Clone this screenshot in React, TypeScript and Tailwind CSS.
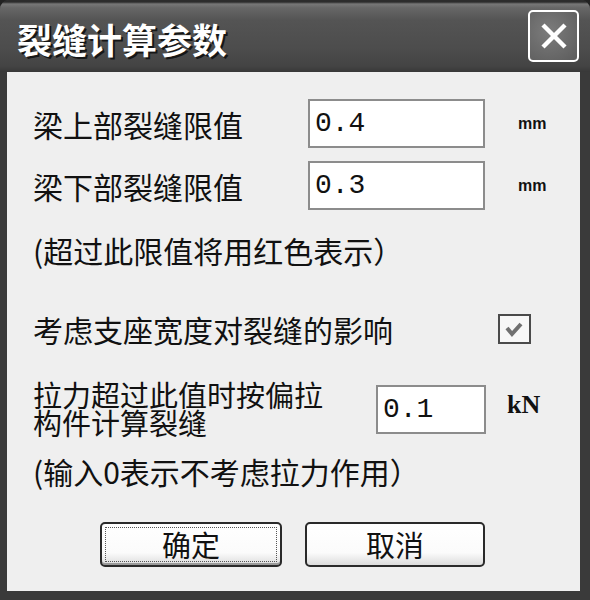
function TitleBar() {
  return (
    <div className="flex h-[72px] items-center justify-between bg-[linear-gradient(to_bottom,#2c2c2c_0px,#2c2c2c_2px,#777_4px,#666_8px,#545454_20px,#4c4c4c_50px,#444_66px,#383838_72px)] pl-[17px] pr-[11px]">
      <span className="pt-[4px] text-[35px] font-bold leading-none text-white [text-shadow:2px_2px_0_#161616]">
        裂缝计算参数
      </span>
      <div className="flex h-[52px] w-[51px] items-center justify-center rounded-[5px] border-2 border-white bg-[radial-gradient(circle_at_40%_40%,#7c7c7c,#5c5c5c)]">
        <svg width="28" height="28" viewBox="0 0 28 28">
          <line x1="3" y1="3" x2="25" y2="25" stroke="white" strokeWidth="4.5" />
          <line x1="25" y1="3" x2="3" y2="25" stroke="white" strokeWidth="4.5" />
        </svg>
      </div>
    </div>
  );
}

function Field({ value, width }: { value: string; width: string }) {
  return (
    <div
      className={`flex h-[49px] items-center border-2 border-[#8c8c8c] bg-white pl-[5px] font-['Liberation_Mono',monospace] text-[28px] leading-none text-[#111] ${width}`}
    >
      {value}
    </div>
  );
}

export default function App() {
  return (
    <div className="h-[600px] w-[590px] bg-[#222] font-['Noto_Sans_CJK_SC',sans-serif]">
      <div className="flex h-full flex-col overflow-hidden rounded-t-[9px] bg-[#3a3a3a]">
        <TitleBar />
        <div className="mb-[9px] ml-[7px] mr-[10px] flex flex-1 flex-col bg-[#efefef] pl-[26px] text-[30px] leading-none text-[#111]">
          {/* 裂缝限值 */}
          <div className="mt-[27px] flex items-center">
            <span className="w-[275px]">梁上部裂缝限值</span>
            <Field value="0.4" width="w-[177px]" />
            <span className="ml-[33px] font-['Liberation_Sans',sans-serif] text-[16px] font-bold">mm</span>
          </div>
          <div className="mt-[13px] flex items-center">
            <span className="w-[275px]">梁下部裂缝限值</span>
            <Field value="0.3" width="w-[177px]" />
            <span className="ml-[33px] font-['Liberation_Sans',sans-serif] text-[16px] font-bold">mm</span>
          </div>
          <div className="mt-[25px] flex h-[30px] items-center">(超过此限值将用红色表示）</div>

          {/* 支座宽度 */}
          <div className="mt-[49px] flex h-[30px] items-center">
            <span className="w-[465px]">考虑支座宽度对裂缝的影响</span>
            <div className="h-[30px] w-[33px] border-2 border-[#4a4a4a] bg-[#f7f7f7]">
              <svg width="29" height="26" viewBox="0 0 29 26">
                <polyline points="7,12 12,18 21,8" fill="none" stroke="#707070" strokeWidth="4" />
              </svg>
            </div>
          </div>

          {/* 偏拉 */}
          <div className="mt-[41px] flex items-start">
            <p className="mt-[-5px] w-[343px] whitespace-pre-line text-[29px] leading-[28px]">
              {"拉力超过此值时按偏拉\n构件计算裂缝"}
            </p>
            <Field value="0.1" width="w-[110px]" />
            <span className="ml-[21px] mt-[7px] font-['Liberation_Serif',serif] text-[26px] font-bold">kN</span>
          </div>
          <div className="mt-[20px] flex h-[30px] items-center">(输入0表示不考虑拉力作用）</div>

          {/* 按钮 */}
          <div className="mt-[36px] flex pl-[67px]">
            <button className="flex h-[45px] w-[182px] items-center justify-center rounded-[5px] border-2 border-[#2a2a2a] bg-[linear-gradient(to_bottom,#fff_0%,#fbfbfb_70%,#dcdcdc_100%)] text-[29px] leading-none text-[#111] shadow-[inset_0_-2px_0_#9a9a9a] outline-1 outline-offset-[-6px] outline-[#555] outline-dotted">
              确定
            </button>
            <button className="ml-[23px] flex h-[45px] w-[180px] items-center justify-center rounded-[5px] border-2 border-[#2a2a2a] bg-[linear-gradient(to_bottom,#fff_0%,#fbfbfb_70%,#dcdcdc_100%)] text-[29px] leading-none text-[#111]">
              取消
            </button>
          </div>
        </div>
      </div>
    </div>
  );
}
